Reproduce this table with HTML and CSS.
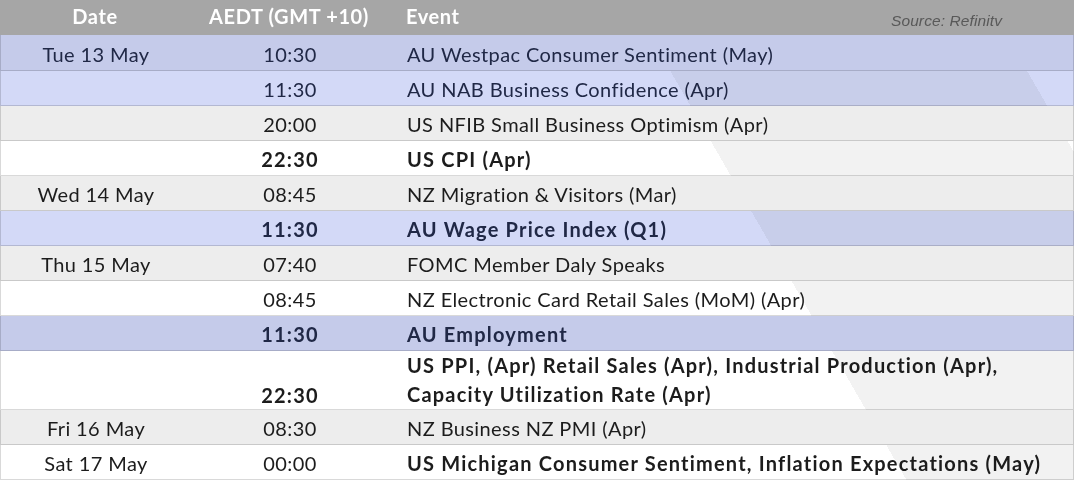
FILE: index.html
```html
<!DOCTYPE html>
<html lang="en">
<head>
<meta charset="utf-8">
<title>Economic calendar</title>
<link rel="stylesheet" href="styles.css">
</head>
<body>
<div class="sched">
  <div class="hdr">
    <div class="c-date">Date</div>
    <div class="c-time">AEDT (GMT +10)</div>
    <div class="c-ev">Event</div>
    <div class="src">Source: Refinitv</div>
  </div>
  <div class="row dk first">
    <div class="c-date">Tue 13 May</div><div class="c-time">10:30</div><div class="c-ev">AU Westpac Consumer Sentiment (May)</div>
  </div>
  <div class="row lt">
    <div class="c-date"></div><div class="c-time">11:30</div><div class="c-ev">AU NAB Business Confidence (Apr)</div>
  </div>
  <div class="row gy">
    <div class="c-date"></div><div class="c-time">20:00</div><div class="c-ev">US NFIB Small Business Optimism (Apr)</div>
  </div>
  <div class="row wh b">
    <div class="c-date"></div><div class="c-time">22:30</div><div class="c-ev">US CPI (Apr)</div>
  </div>
  <div class="row gy">
    <div class="c-date">Wed 14 May</div><div class="c-time">08:45</div><div class="c-ev">NZ Migration &amp; Visitors (Mar)</div>
  </div>
  <div class="row lt b">
    <div class="c-date"></div><div class="c-time">11:30</div><div class="c-ev">AU Wage Price Index (Q1)</div>
  </div>
  <div class="row gy">
    <div class="c-date">Thu 15 May</div><div class="c-time">07:40</div><div class="c-ev">FOMC Member Daly Speaks</div>
  </div>
  <div class="row wh">
    <div class="c-date"></div><div class="c-time">08:45</div><div class="c-ev">NZ Electronic Card Retail Sales (MoM) (Apr)</div>
  </div>
  <div class="row dk b">
    <div class="c-date"></div><div class="c-time">11:30</div><div class="c-ev">AU Employment</div>
  </div>
  <div class="row wh b tall">
    <div class="c-date"></div><div class="c-time">22:30</div><div class="c-ev">US PPI, (Apr) Retail Sales (Apr), Industrial Production (Apr),<br>Capacity Utilization Rate (Apr)</div>
  </div>
  <div class="row gy">
    <div class="c-date">Fri 16 May</div><div class="c-time">08:30</div><div class="c-ev">NZ Business NZ PMI (Apr)</div>
  </div>
  <div class="row wh">
    <div class="c-date">Sat 17 May</div><div class="c-time">00:00</div><div class="c-ev b">US Michigan Consumer Sentiment, Inflation Expectations (May)</div>
  </div>
</div>
</body>
</html>
```
FILE: styles.css
```css
html, body {
  margin: 0;
  padding: 0;
  background: #ffffff;
}

.sched {
  width: 1074px;
  height: 480px;
  font-family: Lato, "Open Sans", sans-serif;
  font-size: 20px;
  letter-spacing: 0.4px;
  color: #1c1c1c;
  /* soft diagonal band behind the translucent rows */
  background: linear-gradient(60deg, #ffffff 785px, #f2f2f2 785px, #f2f2f2 1094px, #ffffff 1094px);
  isolation: isolate;
}

.hdr {
  display: grid;
  grid-template-columns: 190px 198px 1fr auto;
  height: 35px;
  box-sizing: border-box;
  padding-top: 2px;
  line-height: 29px;
  background: #a6a6a6;
  color: #ffffff;
  font-weight: 700;
  letter-spacing: 0.6px;
}

.src {
  font-family: "Liberation Sans", Arial, sans-serif;
  font-style: italic;
  font-weight: 400;
  font-size: 15.5px;
  letter-spacing: 0.1px;
  color: #595959;
  padding-right: 72px;
  padding-top: 4px;
}

.row {
  display: grid;
  grid-template-columns: 190px 198px 1fr;
  height: 35px;
  box-sizing: border-box;
  padding-top: 4px;
  line-height: 29px;
  border-bottom: 1px solid rgba(0, 0, 0, 0.15);
  border-left: 1px solid rgba(0, 0, 0, 0.15);
  border-right: 1px solid rgba(0, 0, 0, 0.15);
}

.row.first {
  height: 36px;
  padding-top: 5px;
}

.row.tall {
  height: 59px;
  padding-top: 0;
  line-height: 28.5px;
}

.row.tall .c-date,
.row.tall .c-time {
  align-self: end;
}

.c-date,
.c-time {
  text-align: center;
}

.c-ev {
  padding-left: 18px;
  white-space: nowrap;
}

.b {
  font-weight: 700;
  letter-spacing: 1.2px;
}

.dk {
  background: #c5cbea;
  color: #202846;
}

.lt {
  background: #d3d9f7;
  mix-blend-mode: multiply;
  color: #202846;
}

.gy {
  background: #ededed;
}

.wh {
  background: transparent;
}
```
